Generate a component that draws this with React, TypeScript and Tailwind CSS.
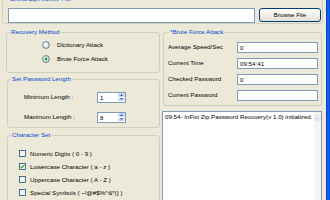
import React from "react";

function Radio({ checked }: { checked?: boolean }) {
  return (
    <svg width="8" height="8" viewBox="0 0 8 8" className="shrink-0">
      <defs>
        <radialGradient id="rg" cx="0.35" cy="0.35" r="0.8">
          <stop offset="0" stopColor="#ffffff" />
          <stop offset="1" stopColor="#dcdad0" />
        </radialGradient>
      </defs>
      <circle cx="4" cy="4" r="3.4" fill="url(#rg)" stroke="#1c5180" strokeWidth="0.7" />
      {checked && <circle cx="4" cy="4" r="1.4" fill="#21a121" />}
    </svg>
  );
}

function Check({ checked }: { checked?: boolean }) {
  return (
    <svg width="7" height="7" viewBox="0 0 7 7" className="shrink-0">
      <rect x="0.5" y="0.5" width="6" height="6" fill="#f4f3ee" stroke="#1c5180" strokeWidth="0.8" />
      {checked && (
        <polyline points="1.6,3.4 2.9,4.8 5.4,1.9" fill="none" stroke="#21a121" strokeWidth="1.1" />
      )}
    </svg>
  );
}

function Spinner({ value }: { value: string }) {
  return (
    <div className="flex h-[11px] w-[29px] border border-[#7f9db9] bg-white">
      <div className="flex-1 pl-[2px] text-[6.2px] leading-[9px]">{value}</div>
      <div className="flex w-[8px] flex-col gap-[1px] p-[0.5px]">
        <div className="flex flex-1 items-center justify-center rounded-[1px] bg-[#c5d5fb]">
          <svg width="3" height="2" viewBox="0 0 3 2"><polygon points="0,2 1.5,0 3,2" fill="#4d6185" /></svg>
        </div>
        <div className="flex flex-1 items-center justify-center rounded-[1px] bg-[#c5d5fb]">
          <svg width="3" height="2" viewBox="0 0 3 2"><polygon points="0,0 1.5,2 3,0" fill="#4d6185" /></svg>
        </div>
      </div>
    </div>
  );
}

function Field({ value }: { value: string }) {
  return (
    <div className="h-[11px] w-[81px] border border-[#7f9db9] bg-white pl-[2px] text-[6.2px] leading-[9px]">
      {value}
    </div>
  );
}

export default function App() {
  return (
    <div className="flex h-[200px] w-[330px] overflow-hidden bg-[#ece9d8] font-['Liberation_Sans',Arial,sans-serif] text-[6.2px] leading-[8px] text-black">
      <div className="flex w-[326px] flex-col">
        {/* File groupbox */}
        <fieldset className="-mt-[5px] ml-[2px] h-[37px] w-[321px] rounded-[3px] border border-[#d0d0bf]">
          <legend className="ml-[6px] px-[1px] leading-[8px] text-[#0046d5]">Select Zip Archive File</legend>
          <div className="flex items-start gap-[4px] pl-[5px] pt-[5px]">
            <div className="h-[15px] w-[247px] border border-[#7f9db9] bg-white" />
            <button className="h-[14px] w-[62px] rounded-[3px] border border-[#003c74] bg-linear-to-b from-white to-[#e3e0d3] text-[6.2px] leading-[12px]">
              Browse File
            </button>
          </div>
        </fieldset>

        <div className="mt-[4px] flex">
          {/* Left column */}
          <div className="ml-[6px] flex w-[154px] flex-col">
            <fieldset className="h-[45px] w-[154px] rounded-[3px] border border-[#d0d0bf]">
              <legend className="ml-[3px] px-[1px] leading-[8px] text-[#0046d5]">Recovery Method</legend>
              <div className="flex flex-col pl-[35px] pt-[2px]">
                <div className="flex h-[14px] items-center gap-[7px]">
                  <Radio />
                  <span>Dictionary Attack</span>
                </div>
                <div className="flex h-[14px] items-center gap-[7px]">
                  <Radio checked />
                  <span>Brute Force Attack</span>
                </div>
              </div>
            </fieldset>

            <fieldset className="ml-[1px] mt-[2px] h-[53px] w-[153px] rounded-[3px] border border-[#d0d0bf]">
              <legend className="ml-[3px] px-[1px] leading-[8px] text-[#0046d5]">Set Password Length</legend>
              <div className="flex flex-col pl-[16px] pt-[4px]">
                <div className="flex h-[20px] items-center">
                  <span className="w-[73px]">Minimum Length :</span>
                  <Spinner value="1" />
                </div>
                <div className="flex h-[20px] items-center">
                  <span className="w-[73px]">Maximum Length :</span>
                  <Spinner value="8" />
                </div>
              </div>
            </fieldset>

            <fieldset className="ml-[1px] mt-[3px] h-[80px] w-[153px] rounded-[3px] border border-[#d0d0bf]">
              <legend className="ml-[3px] px-[1px] leading-[8px] text-[#0046d5]">Character Set</legend>
              <div className="flex flex-col pl-[11px] pt-[8px]">
                <div className="flex h-[13px] items-center gap-[4px]">
                  <Check />
                  <span>Numeric Digits ( 0 - 9 )</span>
                </div>
                <div className="flex h-[13px] items-center gap-[4px]">
                  <Check checked />
                  <span>Lowercase Character ( a - z )</span>
                </div>
                <div className="flex h-[13px] items-center gap-[4px]">
                  <Check />
                  <span>Uppercase Character ( A - Z )</span>
                </div>
                <div className="flex h-[13px] items-center gap-[4px]">
                  <Check />
                  <span>Special Symbols ( ~!@#$%^&amp;*() )</span>
                </div>
              </div>
            </fieldset>
          </div>

          {/* Right column */}
          <div className="ml-[2px] flex w-[160px] flex-col">
            <fieldset className="ml-[1px] h-[78px] w-[159px] rounded-[3px] border border-[#d0d0bf]">
              <legend className="ml-[5px] px-[1px] leading-[8px] text-[#0046d5]">*Brute Force Attack</legend>
              <div className="flex flex-col pl-[4px] pt-[3px]">
                {[
                  ["Average Speed/Sec", "0"],
                  ["Current Time", "09:54:41"],
                  ["Checked Password", "0"],
                  ["Current Password", ""],
                ].map(([l, v]) => (
                  <div key={l} className="flex h-[16px] items-center">
                    <span className="w-[69px]">{l}</span>
                    <Field value={v} />
                  </div>
                ))}
              </div>
            </fieldset>

            <div className="mt-[5px] flex h-[90px] w-[160px] border border-[#7f9db9] bg-white">
              <div className="flex-1 pl-[2px] pt-[1px] leading-[8px] whitespace-nowrap overflow-hidden">
                09:54- InFixi Zip Password Recovery(v 1.0) initialized.
              </div>
              <div className="flex w-[7px] flex-col bg-[#f6f6f1] pt-[3px]">
                <div className="flex h-[6px] items-center justify-center rounded-[1px] border border-[#e4e6ea] bg-[#eef0f5]">
                  <svg width="3" height="2" viewBox="0 0 3 2"><polygon points="0,2 1.5,0 3,2" fill="#c4c7cf" /></svg>
                </div>
              </div>
            </div>
          </div>
        </div>
      </div>
      <div className="h-full w-[4px] bg-linear-to-r from-[#0831d9] via-[#166aee] to-[#0b3fd3]" />
    </div>
  );
}
